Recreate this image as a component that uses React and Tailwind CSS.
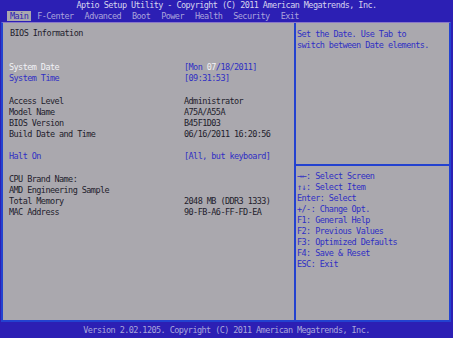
import React from 'react'

const tabs = ['Main', 'F-Center', 'Advanced', 'Boot', 'Power', 'Health', 'Security', 'Exit']

const help = [
    '→←: Select Screen',
    '↑↓: Select Item',
    'Enter: Select',
    '+/-: Change Opt.',
    'F1: General Help',
    'F2: Previous Values',
    'F3: Optimized Defaults',
    'F4: Save & Reset',
    'ESC: Exit',
]

const Row = ({ label, value, labelClass = 'text-[#1e1c2c]', valueClass = 'text-[#1e1c2c]' }) => (
    <div className="grid grid-cols-[175px_1fr] h-[11.2px]">
        <span className={labelClass}>{label}</span>
        <span className={valueClass}>{value}</span>
    </div>
)

const Blank = () => <div className="h-[11.2px]" />

const App = () => {
    return (
        <div className="w-[453px] h-[338px] bg-[#2c1fb4] flex flex-col overflow-hidden font-['DejaVu_Sans_Mono','Liberation_Mono',monospace] text-[8.5px] tracking-[-0.57px] leading-[11.2px] whitespace-pre">
            {/* header */}
            <div className="h-[22px] flex flex-col">
                <div className="h-[10px] leading-[10px] text-center text-[#d6d4ee]">
                    Aptio Setup Utility - Copyright (C) 2011 American Megatrends, Inc.
                </div>
                <div className="flex items-center gap-[11px] pl-[7px] mt-[1px] h-[10px] leading-[10px]">
                    {tabs.map((t, i) => (
                        <span
                            key={t}
                            className={
                                i === 0
                                    ? 'bg-[#aaa8ae] text-[#2c1fb4] px-[3px] mr-[-5px]'
                                    : 'text-[#aba4dc]'
                            }
                        >
                            {t}
                        </span>
                    ))}
                </div>
            </div>

            {/* body */}
            <div className="h-[300px] ml-[1px] mr-[2px] bg-[#aaa8ae] border-t border-t-[#8a78c8] border-l-2 border-r-2 border-b-2 border-[#2342d0] flex">
                <div className="w-[293px] pl-[6px] pt-[5.4px] border-r-2 border-[#2342d0]">
                    <div className="h-[11.2px] text-[#1e1c2c] pl-[1px]">BIOS Information</div>
                    <Blank />
                    <Blank />
                    <Row
                        label="System Date"
                        labelClass="text-[#f2f2f6]"
                        valueClass="text-[#2f2fc4]"
                        value={
                            <>
                                [Mon <span className="text-[#f2f2f6]">07</span>/18/2011]
                            </>
                        }
                    />
                    <Row label="System Time" labelClass="text-[#2f2fc4]" valueClass="text-[#2f2fc4]" value="[09:31:53]" />
                    <Blank />
                    <Row label="Access Level" value="Administrator" />
                    <Row label="Model Name" value="A75A/A55A" />
                    <Row label="BIOS Version" value="B45F1D03" />
                    <Row label="Build Date and Time" value="06/16/2011 16:20:56" />
                    <Blank />
                    <Row label="Halt On" labelClass="text-[#2f2fc4]" valueClass="text-[#2f2fc4]" value="[All, but keyboard]" />
                    <Blank />
                    <Row label="CPU Brand Name:" value="" />
                    <Row label="AMD Engineering Sample" value="" />
                    <Row label="Total Memory" value="2048 MB (DDR3 1333)" />
                    <Row label="MAC Address" value="90-FB-A6-FF-FD-EA" />
                </div>

                <div className="flex-1 flex flex-col text-[#2f2fc4] leading-[11px]">
                    <div className="h-[143px] pl-[1px] pt-[5.5px] border-b-2 border-[#2342d0]">
                        <div>Set the Date. Use Tab to</div>
                        <div>switch between Date elements.</div>
                    </div>
                    <div className="pl-[1px] pt-[4.5px]">
                        {help.map((h) => (
                            <div key={h}>{h}</div>
                        ))}
                    </div>
                </div>
            </div>

            {/* footer */}
            <div className="flex-1 flex items-center justify-center pt-[1px] text-[#aaa8dc]">
                Version 2.02.1205. Copyright (C) 2011 American Megatrends, Inc.
            </div>
        </div>
    )
}

export default App
